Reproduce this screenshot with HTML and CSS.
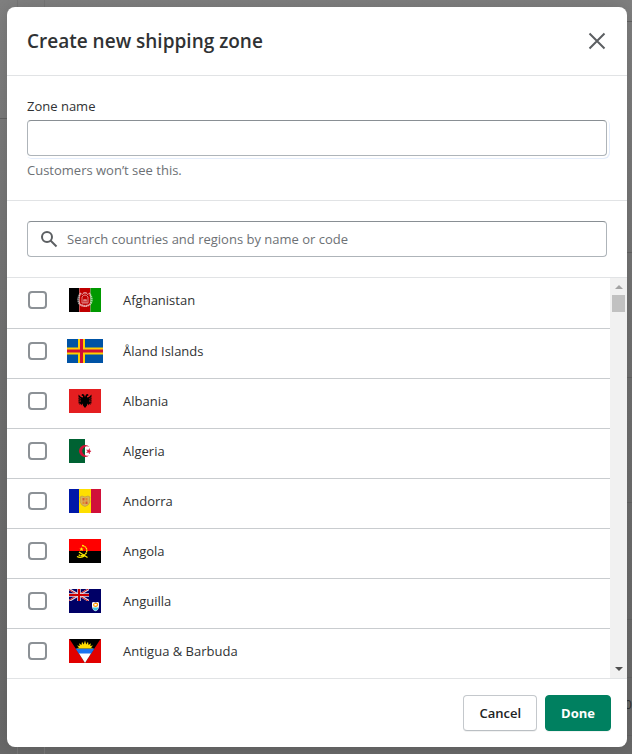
FILE: index.html
```html
<!DOCTYPE html>
<html lang="en">
    <head>
        <meta charset="utf-8">
        <meta name="viewport" content="width=device-width, initial-scale=1.0">
        <title>Create new shipping zone</title>
        <link rel="stylesheet" href="styles.css">
    </head>
    <body>
        <div class="page" aria-hidden="true">
            <div class="page-side"><div class="page-nav"></div></div>
            <div class="page-gutter"></div>
            <div class="page-main">
                <div class="line line-first"></div>
                <div class="line line-tall"></div>
                <div class="line line-mid"></div>
                <div class="line line-mid"></div>
                <div class="line line-low"></div>
                <div class="line"></div>
                <div class="line">0</div>
            </div>
        </div>

        <form class="modal" role="dialog" aria-labelledby="title">
            <header class="header">
                <h2 id="title">Create new shipping zone</h2>
                <button class="close" type="button" aria-label="Close">
                    <svg viewBox="0 0 20 20" width="20" height="20">
                        <path d="M2.5 2.5L17.5 17.5M17.5 2.5L2.5 17.5" />
                    </svg>
                </button>
            </header>

            <section class="section">
                <label for="zone">Zone name</label>
                <input class="field zone" id="zone" type="text" aria-describedby="help">
                <p class="help" id="help">Customers won’t see this.</p>
            </section>

            <section class="section">
                <div class="field search">
                    <svg viewBox="0 0 20 20" width="20" height="20">
                        <circle cx="8" cy="8" r="5" />
                        <path d="M11.5 11.5L17.5 17.5" />
                    </svg>
                    <input type="search" aria-label="Search countries and regions" placeholder="Search countries and regions by name or code">
                </div>
            </section>

            <div class="countries">
                <ul class="list">
                    <li>
                        <label class="country">
                            <input type="checkbox">
                            <svg class="flag" viewBox="0 0 32 24">
                                <path fill="#000" d="M0 0h11v24H0z" />
                                <path fill="#bf0000" d="M10 0h12v24H10z" />
                                <path fill="#090" d="M21 0h11v24H21z" />
                                <path stroke="#d79a9a" stroke-width=".5" d="M10.5 0v24M21.5 0v24" />
                                <g fill="none" stroke="#fff" opacity=".65">
                                    <path stroke-width="2" stroke-dasharray="1.5 .5" d="M12 5Q8 10 10 15Q12 18 16 18Q20 18 22 15Q24 10 20 5" />
                                    <path stroke-width=".8" d="M13 7q3-5 6 0M13 15V9q3-4 6 0v6zM14 12h4M15 15v-3h2v3M12 17q4 3 8 0M14 5h4" />
                                </g>
                            </svg>
                            <span>Afghanistan</span>
                        </label>
                    </li>
                    <li>
                        <label class="country">
                            <input type="checkbox">
                            <svg class="flag flag-wide" viewBox="0 0 36 24">
                                <path fill="#0053a5" d="M0 0h36v24H0z" />
                                <path stroke="#ffce00" stroke-width="7" d="M0 12h36M14.5 0v24" />
                                <path stroke="#d21034" stroke-width="3" d="M0 12h36M14.5 0v24" />
                            </svg>
                            <span>Åland Islands</span>
                        </label>
                    </li>
                    <li>
                        <label class="country">
                            <input type="checkbox">
                            <svg class="flag" viewBox="0 0 32 24">
                                <path fill="#e41e20" d="M0 0h32v24H0z" />
                                <path d="M16 8l-1-2.5-2-.5-.5 1.500 1.500.5v1.500L12 8l-2.500-2.500v9l1-.5v2l1.200-1.500.3 2 1.500-2 .5 2L16 19l2-2.500.5-2 1.500 2 .3-2 1.200 1.500v-2l1 .5v-9L20 8l-2 .5V7l1.500-.5L19 5l-2 .5z" />
                                <path fill="none" stroke="#e41e20" stroke-width=".5" d="M9 8l3 2M9 10.500l3 1M9 13l3-.5M23 8l-3 2M23 10.500l-3 1M23 13l-3-.5" />
                            </svg>
                            <span>Albania</span>
                        </label>
                    </li>
                    <li>
                        <label class="country">
                            <input type="checkbox">
                            <svg class="flag" viewBox="0 0 32 24">
                                <path fill="#fff" d="M0 0h32v24H0z" />
                                <path fill="#006233" d="M0 0h16v24H0z" />
                                <path fill="#d21034" d="M20.5 8A6 6 0 1 0 20.5 16A4.700 4.700 0 1 1 20.5 8z" />
                                <path fill="#d21034" stroke="#d21034" stroke-width=".4" d="M20.5 9.500l-.8 1.700-2.200-.3 1.500 1.300-1.500 1.300 2.200-.2.800 1.700.1-2 1.500-.8-1.500-.7z" />
                            </svg>
                            <span>Algeria</span>
                        </label>
                    </li>
                    <li>
                        <label class="country">
                            <input type="checkbox">
                            <svg class="flag" viewBox="0 0 32 24">
                                <path fill="#0018a8" d="M0 0h10v24H0z" />
                                <path fill="#fedf00" d="M10 0h12v24H10z" />
                                <path fill="#d0103a" d="M22 0h10v24H22z" />
                                <path fill="#d9b25a" stroke="#b8923f" stroke-width=".6" d="M11 8l2-1 3 1 3-1 2 1-.5 2 .5 3-2 3-3 1.5L13 16l-2-3 .5-3z" />
                                <path fill="#d8572e" d="M13.500 9h2v2.500h-2zM16.500 12.500h2V15h-2z" />
                                <path fill="#e6862b" d="M16.500 9h2v2.500h-2zM13.500 12.500h2V15h-2z" />
                            </svg>
                            <span>Andorra</span>
                        </label>
                    </li>
                    <li>
                        <label class="country">
                            <input type="checkbox">
                            <svg class="flag" viewBox="0 0 32 24">
                                <path fill="#f00" d="M0 0h32v12H0z" />
                                <path d="M0 12h32v12H0z" />
                                <path fill="#ffec00" d="M12.5 8l.6 1.400 1.500.1-1.100 1 .3 1.500-1.300-.8-1.300.8.3-1.500-1.100-1 1.500-.1z" />
                                <path fill="none" stroke="#ffec00" stroke-width="1.300" stroke-dasharray="2 .4" d="M13 6.500C18 7 19 12 16.500 15C14.500 17.500 11 17 9.500 15.500" />
                                <path fill="none" stroke="#ffec00" stroke-width="1.300" d="M10 13l8.500 5.500M8 17.500q4 2 8-1" />
                            </svg>
                            <span>Angola</span>
                        </label>
                    </li>
                    <li>
                        <label class="country">
                            <input type="checkbox">
                            <svg class="flag" viewBox="0 0 32 24">
                                <path fill="#006" d="M0 0h32v24H0z" />
                                <svg width="20" height="12" viewBox="0 0 20 12">
                                    <path stroke="#dcdcec" stroke-width="2.200" d="M0 0l20 12M20 0L0 12" />
                                    <path stroke="#c00" stroke-width=".9" d="M0 .5l20 12M20-.5l-20 12" />
                                    <path stroke="#e8d8e0" stroke-width="3.500" d="M10 0v12M0 6h20" />
                                    <path stroke="#c00" stroke-width="2" d="M10 0v12M0 6h20" />
                                </svg>
                                <path fill="#fff" d="M23 13.500q1.500-.8 3.500 0q2-.8 3.500 0V17q0 4-3.500 5.200Q23 21 23 17z" />
                                <path fill="#3cc5df" d="M23.500 18.500h6q-.6 2.500-3 3.300q-2.400-.8-3-3.300z" />
                                <path fill="none" stroke="#f90" stroke-width="1.200" d="M25 17q-1-2.500 1-2.500q3-.5 2.500 1.500q-.5 2-3.500 1z" />
                            </svg>
                            <span>Anguilla</span>
                        </label>
                    </li>
                    <li>
                        <label class="country">
                            <input type="checkbox">
                            <svg class="flag" viewBox="0 0 32 24">
                                <path fill="#e20000" d="M0 0h32v24H0z" />
                                <path d="M.5 0h31L16 24z" />
                                <path fill="#1b74f0" d="M6.500 9.500h19L22 15H10z" />
                                <path fill="#fff" d="M10 14.500h12L16 24z" />
                                <path fill="#fd0" d="M7.500 9.500l2.500-1L8 6.500l2.800.6L10 4.200l2.500 1.800.5-3.200 1.800 2.600L16 1.500l1.200 3.900L19 2.800l.5 3.200L22 4.200l-.8 2.900 2.800-.6-2 2 2.500 1z" />
                            </svg>
                            <span>Antigua &amp; Barbuda</span>
                        </label>
                    </li>
                </ul>
                <div class="scrollbar" aria-hidden="true">
                    <span class="arrow arrow-up"></span>
                    <span class="thumb"></span>
                    <span class="arrow arrow-down"></span>
                </div>
            </div>

            <footer class="footer">
                <button class="button" type="button">Cancel</button>
                <button class="button primary" type="submit">Done</button>
            </footer>
        </form>
    </body>
</html>
```

FILE: styles.css
```css
* {
    box-sizing: border-box;
}
body {
    margin: 0;
    display: grid;
    height: 100vh;
    overflow: hidden;
    font-family: "Segoe UI", "Open Sans", sans-serif;
    font-size: 13px;
    line-height: 20px;
    color: #303234;
}

/* dimmed page under the dialog */
.page {
    grid-area: 1 / 1;
    display: flex;
    background: linear-gradient(#808080, #707070 50%, #696969);
}
.page-side {
    width: 17px;
}
.page-nav {
    height: 119px;
    border-bottom: 1px solid #626262;
}
.page-gutter {
    width: 28px;
    border: solid #777;
    border-width: 0 1px;
}
.page-main {
    flex: 1;
}
.line {
    height: 58px;
    border-bottom: 1px solid #636363;
    text-align: right;
    line-height: 52px;
}
.line-first {
    height: 22px;
}
.line-tall {
    height: 231px;
}
.line-mid {
    height: 125px;
}
.line-low {
    height: 117px;
}

.modal {
    grid-area: 1 / 1;
    display: flex;
    flex-direction: column;
    min-height: 0;
    margin: 7px 5px 7px 7px;
    background: #fff;
    border-radius: 8px;
    box-shadow: 0 0 20px rgba(0, 0, 0, .15);
    overflow: hidden;
}
.header {
    display: flex;
    align-items: center;
    justify-content: space-between;
    padding: 16px 20px;
    border-bottom: 1px solid #e1e3e5;
}
h2 {
    margin: 0;
    font-size: 19px;
    line-height: 36px;
    font-weight: 600;
}
.close {
    display: flex;
    padding: 0;
    border: 0;
    background: none;
}
.close svg {
    stroke: #5c5f62;
    stroke-width: 2;
}

.section {
    padding: 20px;
    border-bottom: 1px solid #e1e3e5;
}
.section label {
    display: block;
    margin-bottom: 4px;
}
.field {
    display: flex;
    width: 100%;
    height: 36px;
    border: 1px solid #aeb4b9;
    border-top-color: #898f94;
    border-radius: 4px;
    background: #fff;
}
.zone {
    padding: 0 12px;
    font: inherit;
    box-shadow: 0 0 0 2px #fff, 1px 1px 0 2px #e4edfb;
}
.help {
    margin: 4px 0 0;
    color: #6d7175;
}
.search {
    align-items: center;
    gap: 8px;
    padding: 0 11px;
}
.search svg {
    fill: none;
    stroke: #5c5f62;
    stroke-width: 2;
}
.search input {
    flex: 1;
    padding: 0;
    border: 0;
    background: none;
    font: inherit;
}
.search input::placeholder {
    color: #6d7175;
}

.countries {
    flex: 1;
    display: flex;
    min-height: 0;
}
.list {
    flex: 1;
    margin: 0;
    padding: 0;
    list-style: none;
    overflow-y: auto;
    scrollbar-width: none;
}
.list li {
    height: 50px;
}
.list li + li {
    border-top: 1px solid #c9cccf;
}
.country {
    display: flex;
    align-items: center;
    gap: 20px;
    padding: 10px 21px;
}
.country input {
    appearance: none;
    width: 19px;
    height: 18px;
    margin: 0;
    border: 2px solid #8c9196;
    border-radius: 4px;
}
.country input:checked {
    background: #008060;
}
.flag {
    width: 32px;
    height: 24px;
    margin: 0 2px;
}
.flag-wide {
    width: 36px;
    margin: 0;
}

.scrollbar {
    display: flex;
    flex-direction: column;
    align-items: center;
    width: 17px;
    padding: 7px 0;
    background: #f1f1f1;
}
.arrow {
    border: 4px solid transparent;
}
.arrow-up {
    border-top: 0;
    border-bottom-color: #a3a3a3;
}
.arrow-down {
    margin-top: auto;
    border-bottom: 0;
    border-top-color: #505050;
}
.thumb {
    width: 13px;
    height: 17px;
    margin-top: 6px;
    background: #c1c1c1;
}

.footer {
    display: flex;
    justify-content: flex-end;
    gap: 8px;
    padding: 16px;
    border-top: 1px solid #e1e3e5;
}
.button {
    height: 36px;
    padding: 0 15px;
    border: 1px solid #c4c8cc;
    border-bottom-color: #babfc3;
    border-radius: 4px;
    background: #fff;
    box-shadow: 0 1px 0 rgba(0, 0, 0, .05);
    color: #202223;
    font: inherit;
    font-weight: 600;
}
.primary {
    border-color: #008060;
    background: #008060;
    color: #fff;
    font-weight: 700;
}
```
